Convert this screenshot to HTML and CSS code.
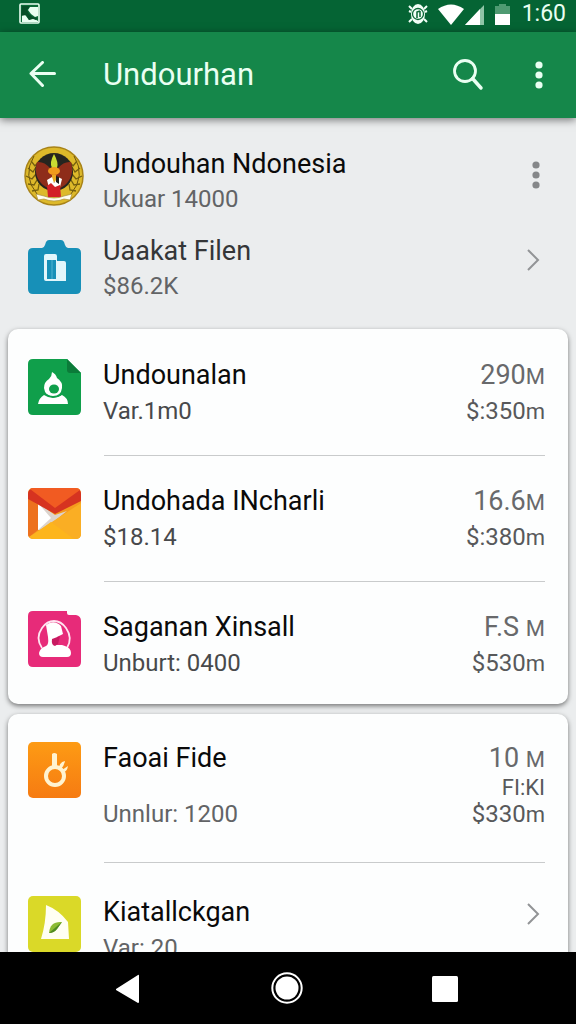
FILE: index.html
```html
<!DOCTYPE html>
<html lang="id">
<head>
<meta charset="utf-8">
<meta name="viewport" content="width=device-width, initial-scale=1">
<title>Undourhan</title>
<link rel="stylesheet" href="styles.css">
</head>
<body>
<div class="status">
  <svg width="22" height="22" viewBox="0 0 22 22" aria-hidden="true"><rect x="1" y="1" width="19" height="19" rx="1" fill="#0b6a37" stroke="#eafff2" stroke-width="1.6"/><path d="M11 4h8v9l-3 1-4-3-3-4z" fill="#eafff2"/><path d="M3 9l4 4 3 4 4-2 5 3v1H3z" fill="#eafff2"/><path d="M3 3h8l-3 4 2 4 4 3 4 1-1 2-3-1-4 1-3-5-5 1z" fill="#064f28"/></svg>
  <div class="status-right">
    <svg width="22" height="22" viewBox="0 0 22 22" aria-hidden="true"><ellipse cx="11" cy="11" rx="7" ry="10" fill="#f2fff7"/><path d="M5 6L2 3M17 6l3-3M5 16l-3 3M17 16l3 3M4 9L2 8M18 9l2-1" stroke="#f2fff7" stroke-width="2"/><circle cx="11" cy="11" r="5.5" fill="none" stroke="#0a6635" stroke-width="1.3"/><path d="M10 15V9l3-1M13 8v6" fill="none" stroke="#0a6635" stroke-width="1.5"/></svg>
    <svg class="wifi" width="48" height="22" viewBox="0 0 48 22" aria-hidden="true"><path d="M0 6Q13-3 26 6L13 22z" fill="#fff"/><path d="M27 22L46 2v20z" fill="#8fc5a7"/><path d="M27 22L42 6v16z" fill="#fff"/></svg>
    <svg class="battery" width="15" height="22" viewBox="0 0 15 22" aria-hidden="true"><path d="M0 3h4V1h7v2h4v8H0z" fill="#4f9a72"/><path d="M0 11h15v11H0z" fill="#fff"/></svg>
    <span class="time">1:60</span>
  </div>
</div>
<header class="appbar">
  <button class="icon-btn" aria-label="Kembali"><svg width="28" height="28" viewBox="0 0 28 28"><path d="M26.500 12.500H3M14.500 1.500L3 12.500l11.500 12" fill="none" stroke="#eafff2" stroke-width="3" stroke-linecap="round" stroke-linejoin="round"/></svg></button>
  <h1>Undourhan</h1>
  <button class="icon-btn" aria-label="Cari"><svg width="32" height="32" viewBox="0 0 32 32"><circle cx="13" cy="12" r="10.500" fill="none" stroke="#eafff2" stroke-width="2.800"/><path d="M20.500 19.500L29 29" stroke="#eafff2" stroke-width="3.500" stroke-linecap="round"/></svg></button>
  <button class="icon-btn menu" aria-label="Menu"><svg width="8" height="28" viewBox="0 0 8 28" fill="#eafff2"><circle cx="4" cy="4" r="3.600"/><circle cx="4" cy="14" r="3.600"/><circle cx="4" cy="24" r="3.600"/></svg></button>
</header>
<main class="content">
  <section class="top">
    <div class="row">
      <svg class="icon emblem" width="60" height="60" viewBox="0 0 60 60" aria-hidden="true">
        <circle cx="30" cy="30" r="29" fill="#ddb92a" stroke="#a88318" stroke-width="1.500"/>
        <path d="M10 10q-12 20 3 38M50 10q12 20-3 38" fill="none" stroke="#6d5410" stroke-width="1"/>
        <path d="M4 22l5 4 3-5M2 30l6 3 4-5M4 38l6 1 3-5M8 45l6-1 1-6M7 15l4 5 4-5M56 22l-5 4-3-5M58 30l-6 3-4-5M56 38l-6 1-3-5M52 45l-6-1-1-6M53 15l-4 5-4-5" fill="none" stroke="#75600f" stroke-width="1.300"/>
        <circle cx="30" cy="26" r="19" fill="#26251f"/>
        <path d="M13 16q7-1 13 6l4 3 4-3q6-7 13-6 4 14-6 23l-6 4H25l-6-4Q9 30 13 16z" fill="#8e2d1a"/>
        <path d="M30 8q-5 9-2 14h5q2-5-3-14z" fill="#cadb32"/>
        <ellipse cx="30" cy="25" rx="6" ry="4" fill="#f09a1c"/>
        <path d="M28 29h4v7h-4z" fill="#e8a923"/>
        <path d="M23 34l5-3 2 6 4-6 4 2-2 8-5 3-6-2z" fill="#fff"/>
        <path d="M32 30l3 1v7l-3-2z" fill="#20201e"/>
        <path d="M23 40l4-3 4 4 5-2 1 12H24z" fill="#d21f27"/>
        <path d="M12 48l8 2q10 4 20 0l8-2-2 6-6-1q-10 4-20 0l-6 1z" fill="#fffdf0" stroke="#a78f41" stroke-width=".700"/>
      </svg>
      <div class="text"><h2>Undouhan Ndonesia</h2><p>Ukuar 14000</p></div>
      <button class="icon-btn more" aria-label="Opsi lainnya"><svg width="8" height="28" viewBox="0 0 8 28" fill="#858789"><circle cx="4" cy="4" r="3.600"/><circle cx="4" cy="14" r="3.600"/><circle cx="4" cy="24" r="3.600"/></svg></button>
    </div>
    <a class="row" href="#filen">
      <svg class="icon" width="54" height="56" viewBox="0 0 54 56" aria-hidden="true"><path d="M5 9h9q2 0 3-3l1-3q1-2 3-2h12q2 0 3 2l1 3q1 3 3 3h8q5 0 5 5v36q0 5-5 5H5q-5 0-5-5V14q0-5 5-5z" fill="#1790b8"/><path d="M18 15h9q2 0 2 2v5h7q2 0 2 2v18H18q-2 0-2-2V17q0-2 2-2z" fill="#e2f6fb"/><path d="M19 21h9v19h-9z" fill="#1790b8"/><path d="M24 21v19" stroke="#4fb4d3" stroke-width="1"/></svg>
      <div class="text"><h2 class="soft">Uaakat Filen</h2><p>$86.2K</p></div>
      <svg class="chevron" width="14" height="24" viewBox="0 0 14 24" aria-hidden="true"><path d="M2 2l10 10L2 22" fill="none" stroke="#929496" stroke-width="2"/></svg>
    </a>
  </section>
  <section class="card">
    <div class="row">
      <svg class="icon" width="54" height="56" viewBox="0 0 54 56" aria-hidden="true"><path d="M5 0h34l14 14v37q0 5-5 5H5q-5 0-5-5V5q0-5 5-5z" fill="#109f4b"/><path d="M39 0l14 14H42q-3 0-3-3z" fill="#0b7b39"/><path d="M24 13q4 2 5 6 6 4 5 10-1 8-9 8-8 0-9-8 0-6 5-9 3-3 3-7z" fill="#fff"/><ellipse cx="26" cy="30" rx="5" ry="4.500" fill="#109f4b"/><path d="M16 36q9 6 18 0 6 3 6 9H10q1-6 6-9z" fill="#fff"/><path d="M19 36q7 4 14 0" fill="none" stroke="#109f4b" stroke-width="1"/></svg>
      <div class="text"><h2>Undounalan</h2><p class="dark">Var.1m0</p></div>
      <div class="amount"><p class="big">290<small>M</small></p><p>$:350<small>m</small></p></div>
    </div>
    <div class="row">
      <svg class="icon" width="54" height="56" viewBox="0 0 54 56" aria-hidden="true"><rect y="3" width="53" height="51" rx="5" fill="#f59a1d"/><path d="M0 13l10 7v25L1 52q-1-1-1-3z" fill="#ed711e"/><path d="M10 18l17 12 12-4-24 19h-5z" fill="#dcd3cd"/><path d="M10 18v27l13-12z" fill="#fff"/><path d="M53 18v31q0 5-5 5H5q-3 0-4-2z" fill="#faae24"/><path d="M2 52l21-15 23 17H5z" fill="#fdb51c"/><path d="M0 9q0-4 3-5h47q3 1 3 5v7L27 29 0 14z" fill="#d63320"/><path d="M2 4q1-1 3-1h43q3 0 4 2L27 23z" fill="#f15b22"/></svg>
      <div class="text"><h2>Undohada INcharli</h2><p class="dark">$18.14</p></div>
      <div class="amount"><p class="big">16.6<small>M</small></p><p>$:380<small>m</small></p></div>
    </div>
    <div class="row">
      <svg class="icon" width="54" height="56" viewBox="0 0 54 56" aria-hidden="true"><path d="M5 0h34v2q0 2 2 2h7q5 1 5 6v41q0 5-5 5H5q-5 0-5-5V5q0-5 5-5z" fill="#e72b79"/><path d="M14 37Q7 27 14 17q5-7 12-7t12 7q7 10 1 20" fill="none" stroke="#ffe4f0" stroke-width="1.800"/><path d="M18 14q8-6 15 1l2 8-6 3-1 8h6l3 1q6 2 6 7 0 4-4 4H15q-4 0-4-4 1-5 7-7 3-1 2-9z" fill="#fff"/><path d="M24 28l8-3-2 8-3 2q-4-1-3-7z" fill="#c81a61"/></svg>
      <div class="text"><h2>Saganan Xinsall</h2><p class="dark">Unburt: 0400</p></div>
      <div class="amount"><p class="big">F.S <small>M</small></p><p>$530<small>m</small></p></div>
    </div>
  </section>
  <section class="card">
    <div class="row tall">
      <svg class="icon" width="54" height="56" viewBox="0 0 54 56" aria-hidden="true"><defs><linearGradient id="o" x2="0" y2="1"><stop stop-color="#fd9b14"/><stop offset="1" stop-color="#f67b12"/></linearGradient></defs><rect width="53" height="56" rx="5" fill="url(#o)"/><circle cx="27" cy="34" r="9" fill="none" stroke="#fff3d0" stroke-width="4"/><path d="M24 12q2-2 5 0v14h-5z" fill="#fff3d0"/><path d="M31 25q1-5 6-6-1 5-4 8zM34 28l6-4q-1 6-5 6z" fill="#fff3d0"/></svg>
      <div class="text"><h2>Faoai Fide</h2><p>Unnlur: 1200</p></div>
      <div class="amount"><p class="big">10 <small>M</small></p><p class="tag">FI:KI</p><p>$330<small>m</small></p></div>
    </div>
    <a class="row link" href="#kiat">
      <svg class="icon" width="54" height="56" viewBox="0 0 54 56" aria-hidden="true"><rect width="53" height="56" rx="5" fill="#dad928"/><path d="M18 9q13 5 22 17l1 17H13q5-16 5-34z" fill="#fffff2"/><path d="M34 26q-12-1-13 11 5 0 8-4z" fill="#8cbb32"/><path d="M34 26L21 37q5 0 8-4z" fill="#4f8a22"/></svg>
      <div class="text"><h2>Kiatallckgan</h2><p>Var: 20</p></div>
      <svg class="chevron" width="14" height="24" viewBox="0 0 14 24" aria-hidden="true"><path d="M2 2l10 10L2 22" fill="none" stroke="#929496" stroke-width="2"/></svg>
    </a>
  </section>
</main>
<nav class="navbar" aria-label="Sistem">
  <button aria-label="Kembali"><svg width="32" height="32" viewBox="0 0 32 32"><path d="M4 17L26 3q1-1 1 1v26q0 1-1 1L4 18z" fill="#fff"/></svg></button>
  <button aria-label="Beranda"><svg width="32" height="32" viewBox="0 0 32 32"><circle cx="16" cy="16" r="14.700" fill="none" stroke="#fff" stroke-width="2"/><circle cx="16" cy="16" r="11.500" fill="#fff"/></svg></button>
  <button aria-label="Terbaru"><svg width="32" height="32" viewBox="0 0 32 32"><rect x="2" y="4" width="26" height="26" rx="1.500" fill="#fff"/></svg></button>
</nav>
</body>
</html>
```
FILE: styles.css
```css
* { box-sizing: border-box; }
body {
  margin: 0;
  height: 100vh;
  display: flex;
  flex-direction: column;
  overflow: hidden;
  background: #ebedee;
  color: #0a0a0a;
  font-family: Roboto, "Liberation Sans", sans-serif;
}
h1, h2, p { margin: 0; font-weight: 400; }
button { border: 0; padding: 0; background: none; display: flex; align-items: center; justify-content: center; }
svg { display: block; flex: none; }
a { color: inherit; text-decoration: none; }

.status {
  flex: none;
  height: 32px;
  padding: 0 10px 4px 19px;
  display: flex;
  align-items: center;
  justify-content: space-between;
  background: #056434;
}
.status-right { display: flex; align-items: center; }
.wifi { margin-left: 9px; }
.battery { margin-left: 9px; }
.time { margin-left: 12px; font-size: 23px; line-height: 28px; color: #eafff2; }

.appbar {
  flex: none;
  height: 86px;
  padding: 0 13px 0 18px;
  display: flex;
  align-items: center;
  background: #15874a;
  box-shadow: 0 2px 8px rgba(0, 0, 0, .5);
  z-index: 1;
}
.appbar h1 { flex: 1; margin-left: 37px; font-size: 31px; line-height: 40px; color: #eafff2; }
.icon-btn { width: 48px; height: 48px; }
.menu { margin-left: 23px; }

.content { flex: 1; min-height: 0; overflow: hidden; }
.top { padding: 28px 8px 26px; display: flex; flex-direction: column; gap: 17px; }
.row { display: flex; align-items: flex-start; padding-left: 20px; padding-right: 23px; }
.icon { width: 54px; margin-top: 2px; }
.top .icon { margin-top: 6px; }
.top .emblem { width: 60px; margin: 0 -2px 0 -4px; }
.text { flex: 1; min-width: 0; margin-left: 21px; }
h2 { font-size: 27px; line-height: 36px; white-space: nowrap; }
.text p { font-size: 24px; line-height: 36px; color: #626466; }
.text .dark { color: #48494b; }
.text .soft { color: #343638; }
.more { margin: 5px -15px 0 0; }
.chevron { margin: 15px 5px 0 0; }
.top .text p { line-height: 34px; }

.card {
  margin: 0 8px 10px;
  border-radius: 10px;
  background: #fdfefe;
  box-shadow: 0 2px 5px rgba(0, 0, 0, .5);
}
.card .row { position: relative; padding-top: 28px; padding-bottom: 26px; }
.card .row + .row::before {
  content: "";
  position: absolute;
  top: 0;
  left: 96px;
  right: 23px;
  height: 1px;
  background: #c9cbcc;
}
.card .row:last-child { padding-bottom: 23px; }
.amount { text-align: right; color: #58595b; font-size: 24px; line-height: 32px; white-space: nowrap; }
.amount .big { font-size: 27px; line-height: 36px; color: #68696b; }
.amount small { font-size: 22px; }
.amount .tag { font-size: 22px; line-height: 20px; }
.card .tall { padding-top: 26px; padding-bottom: 30px; }
.tall .text p { margin-top: 20px; }
.card .link { padding-top: 32px; }
.card .chevron { margin-top: 8px; }

.navbar {
  flex: none;
  height: 72px;
  padding: 0 50px 0 48px;
  display: flex;
  justify-content: space-around;
  background: #000;
  z-index: 1;
}
.navbar button { width: 48px; height: 72px; }
```
